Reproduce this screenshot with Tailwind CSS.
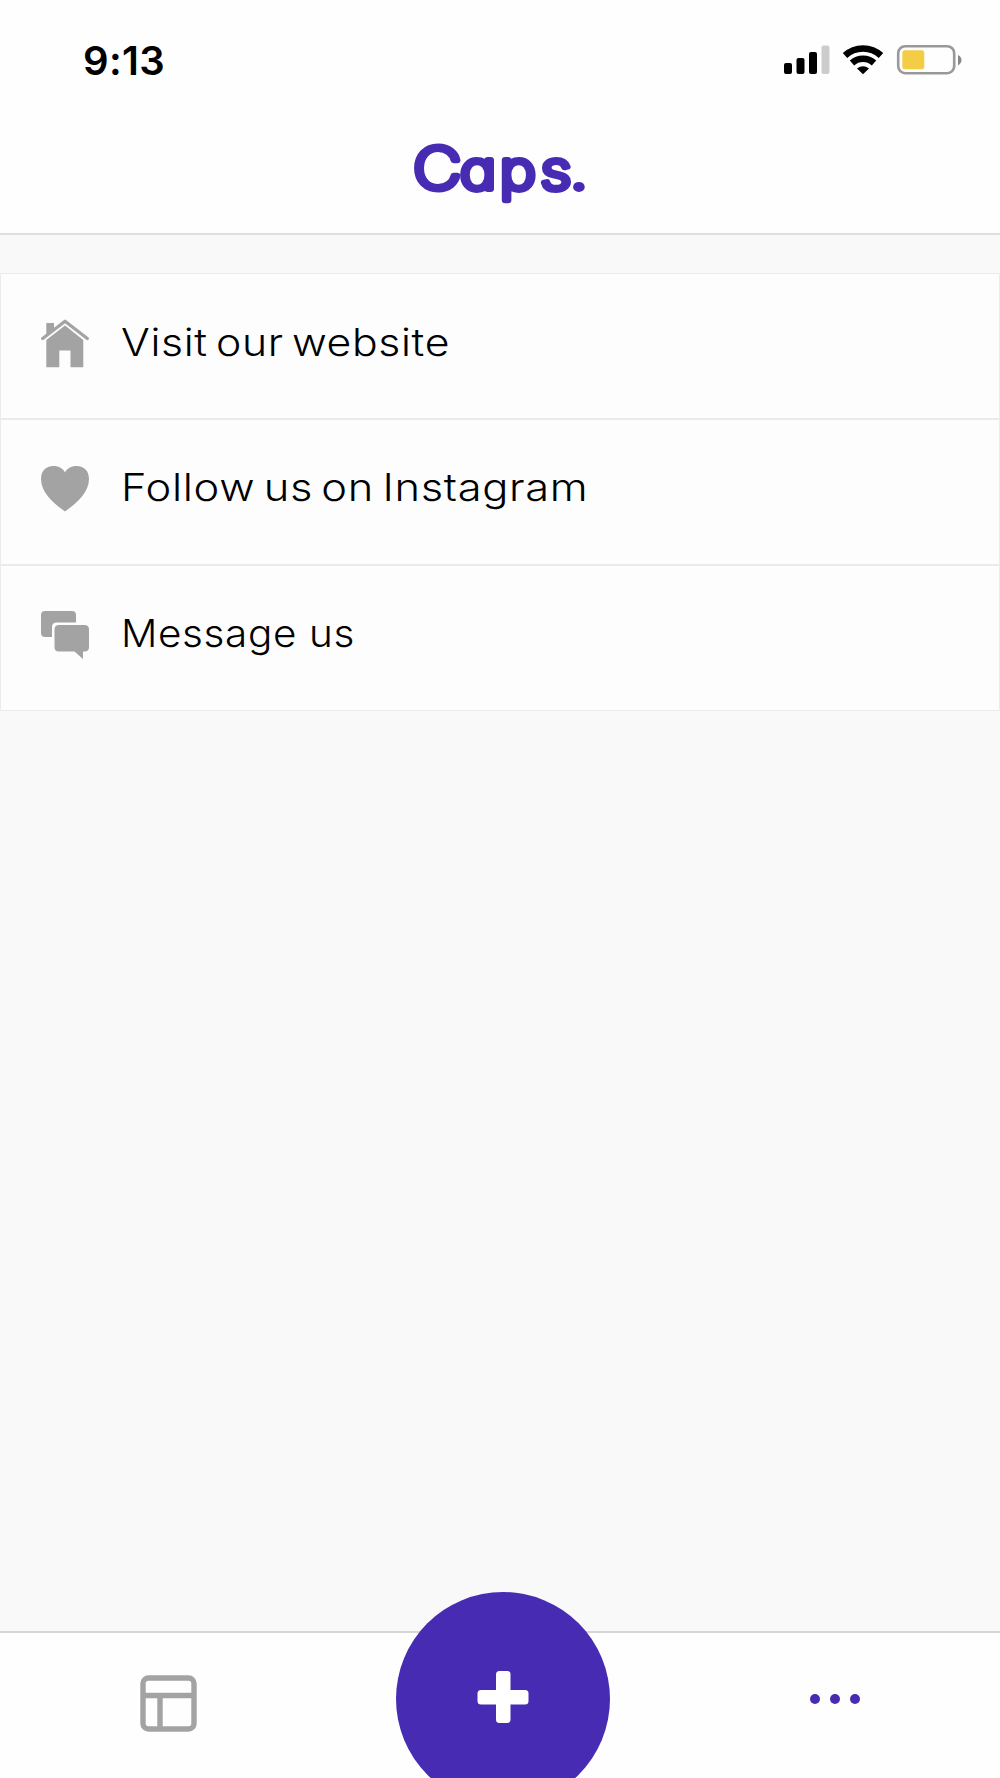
<!DOCTYPE html>
<html lang="en">
<head>
<meta charset="utf-8">
<meta name="viewport" content="width=device-width, initial-scale=1">
<title>Caps.</title>
<script src="https://cdn.jsdelivr.net/npm/@tailwindcss/browser@4"></script>
</head>
<body class="font-['Inter',sans-serif] text-black bg-[#f9f9f9]">
<div class="flex flex-col h-[1778px] w-[1000px] overflow-hidden">
  <header class="h-[235px] shrink-0 bg-[#fefefe] border-b-2 border-[#dedede] flex flex-col">
    <div class="h-[120px] flex items-center justify-between pl-[83px] pr-[37px]">
      <span class="text-[40px] font-semibold leading-none tracking-[0.3px] mt-[1px]">9:13</span>
      <svg class="w-[184px] h-[40px]" viewBox="0 0 184 40">
        <rect x="5" y="23" width="8" height="11" rx="2"/>
        <rect x="17.500" y="18" width="8" height="16" rx="2"/>
        <rect x="30" y="12" width="8" height="22" rx="2"/>
        <rect x="42.500" y="5.500" width="8" height="28.500" rx="2" fill="#ccc"/>
        <g fill="none" stroke="#000" stroke-width="6.600">
          <path d="M66 15.500 A26.500 26.500 0 0 1 102 15.500"/>
          <path d="M73 23 A16.500 16.500 0 0 1 95 23"/>
        </g>
        <path d="M84 34.200 L78 28.600 Q84 23.800 90 28.600 Z"/>
        <rect x="119.200" y="6.200" width="56" height="27" rx="7" fill="none" stroke="#999" stroke-width="2.600"/>
        <rect x="123.300" y="10.300" width="22" height="19" rx="2.500" fill="#f5cc45"/>
        <path d="M179 15 Q182.500 17 182.500 20 T179 25.500Z" fill="#888"/>
      </svg>
    </div>
    <div class="flex justify-center">
      <svg class="w-[180px] h-[112px]" viewBox="0 0 180 112" fill="#472bb3" stroke="#472bb3" stroke-linejoin="round">
        <text y="69" transform="scale(1.15 1)" class="[font-feature-settings:'cv11']" font-weight="200" stroke-width="6"><tspan x="2.600" font-size="58">C</tspan><tspan x="43.500 78 113.500" font-size="53">aps</tspan><tspan x="139.500" font-size="53">.</tspan></text>
      </svg>
    </div>
  </header>
  <main class="flex-1 pt-[38px]">
    <ul class="bg-[#fdfdfd] border border-[#ebebeb] text-[38.5px] font-light leading-none">
      <li class="h-[146px] flex items-center border-b-2 border-[#ebebeb] pl-10">
        <svg class="w-[48px] h-[49px] mr-[33px] -mt-[5px]" viewBox="0 0 48 49" fill="#a3a3a3">
          <path d="M5.300 17V4H13V10.300Z"/>
          <path d="M1.700 19.500L24 2.200L46.300 19.500" fill="none" stroke="#a3a3a3" stroke-width="3.200" stroke-linecap="round" stroke-linejoin="round"/>
          <path d="M24 6.500L42.300 21V48.300H29.500V31.500H18.300V48.300H5.300V21Z"/>
        </svg>
        <span class="tracking-[0.6px] [word-spacing:-4px] -mt-[8px] origin-left scale-x-[1.108] -ml-px">Visit our website</span>
      </li>
      <li class="h-[146px] flex items-center border-b-2 border-[#ebebeb] pl-10">
        <svg class="w-[48px] h-[46px] mr-[33px] -mt-[6px]" viewBox="0 0 48 46" fill="#a3a3a3">
          <path d="M24 45.500C13 37.500 0 27 0 13C0 5 5 0 12.500 0C18 0 22 2.500 24 6.500C26 2.500 30 0 35.500 0C43 0 48 5 48 13C48 27 35 37.500 24 45.500Z"/>
        </svg>
        <span class="tracking-[0.6px] [word-spacing:-4px] -mt-[9px] origin-left scale-x-[1.128] -ml-px">Follow us on Instagram</span>
      </li>
      <li class="h-[144px] flex items-center pl-10">
        <svg class="w-[48px] h-[48px] mr-[33px] -mt-[7px]" viewBox="0 0 48 48" fill="#a3a3a3">
          <path d="M4 0H31Q35 0 35 4V11.500H15.500Q11 11.500 11 16V26H4Q0 26 0 22V4Q0 0 4 0Z"/>
          <path d="M18 14H43.500Q48 14 48 18.500V36Q48 40.500 43.500 40.500H42V48L33.500 40.500H18Q13.500 40.500 13.500 36V18.500Q13.500 14 18 14Z"/>
        </svg>
        <span class="tracking-[0.6px] -mt-[9px] origin-left scale-x-[1.05] -ml-px">Message us</span>
      </li>
    </ul>
  </main>
  <nav class="relative h-[147px] shrink-0 bg-[#fefefe] border-t-2 border-[#d6d6d6] flex justify-between px-[140px]">
    <svg class="w-[57px] h-[57px] mt-[42px]" viewBox="0 0 57 57" fill="none" stroke="#a3a3a3" stroke-width="5.400">
      <rect x="3" y="3" width="51" height="51" rx="5.500"/>
      <path d="M3 20.500H54M20 20.500V54"/>
    </svg>
    <button class="absolute left-[396px] -top-[41px] w-[214px] h-[214px] rounded-full bg-[#472bb3] flex items-center justify-center" aria-label="Add">
      <svg class="w-[52px] h-[52px] -mt-[5px] -ml-[1px]" viewBox="0 0 52 52" fill="#fff"><rect x="19" y="0" width="14.500" height="52" rx="3.500"/><rect x="0.500" y="19" width="51" height="14.500" rx="3.500"/></svg>
    </button>
    <div class="flex gap-[10px] mt-[61px]">
      <i class="size-[10px] rounded-full bg-[#472bb3]"></i>
      <i class="size-[10px] rounded-full bg-[#472bb3]"></i>
      <i class="size-[10px] rounded-full bg-[#472bb3]"></i>
    </div>
  </nav>
</div>
</body>
</html>
